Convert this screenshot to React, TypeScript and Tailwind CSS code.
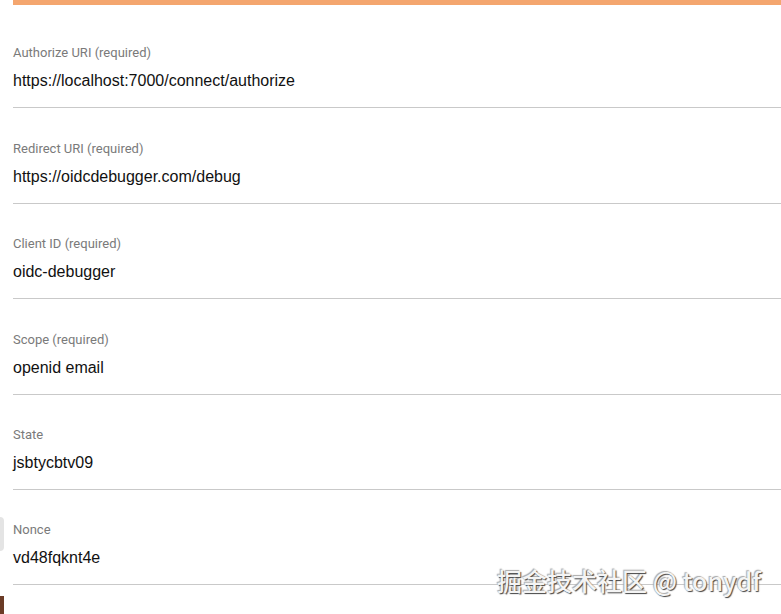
const FIELDS = [
  { label: 'Authorize URI (required)', value: 'https://localhost:7000/connect/authorize' },
  { label: 'Redirect URI (required)', value: 'https://oidcdebugger.com/debug' },
  { label: 'Client ID (required)', value: 'oidc-debugger' },
  { label: 'Scope (required)', value: 'openid email' },
  { label: 'State', value: 'jsbtycbtv09' },
  { label: 'Nonce', value: 'vd48fqknt4e' },
]

function Field({ label, value }: { label: string; value: string }) {
  return (
    <div className="flex flex-col pt-[32.4px] pb-[14px] border-b border-[#c9c9c9]">
      <label className="text-[13px] leading-[16px] text-[#7a7a7a]">{label}</label>
      <div className="mt-2 text-[16px] leading-[24px] text-[#111] font-['Liberation_Sans',Arial,sans-serif]">
        {value}
      </div>
    </div>
  )
}

export default function App() {
  return (
    <div className="relative w-[781px] h-[614px] overflow-hidden bg-white font-['Roboto','Liberation_Sans',sans-serif]">
      <div className="pl-[13px]">
        <div className="h-[5px] bg-[#f4a66f]" />
        <div className="mt-[8px]">
          {FIELDS.map((f) => (
            <Field key={f.label} label={f.label} value={f.value} />
          ))}
        </div>
      </div>

      {/* bits of the neighbouring window on the left edge */}
      <div className="absolute left-0 top-[517px] w-[4px] h-[34px] rounded-r bg-[#e4e4e4]" />
      <div className="absolute left-0 top-[596px] w-[4px] h-[18px] bg-[#6b3b26]" />

      {/* watermark */}
      <div className="absolute left-[497px] top-[563px] text-[25px] leading-[34px] font-medium text-[#f4f4f4] font-['Noto_Sans_CJK_SC','Noto_Sans',sans-serif] [text-shadow:1px_1px_1px_#444,-1px_-1px_1px_#aaa]">
        掘金技术社区 @ tonydf
      </div>
    </div>
  )
}
